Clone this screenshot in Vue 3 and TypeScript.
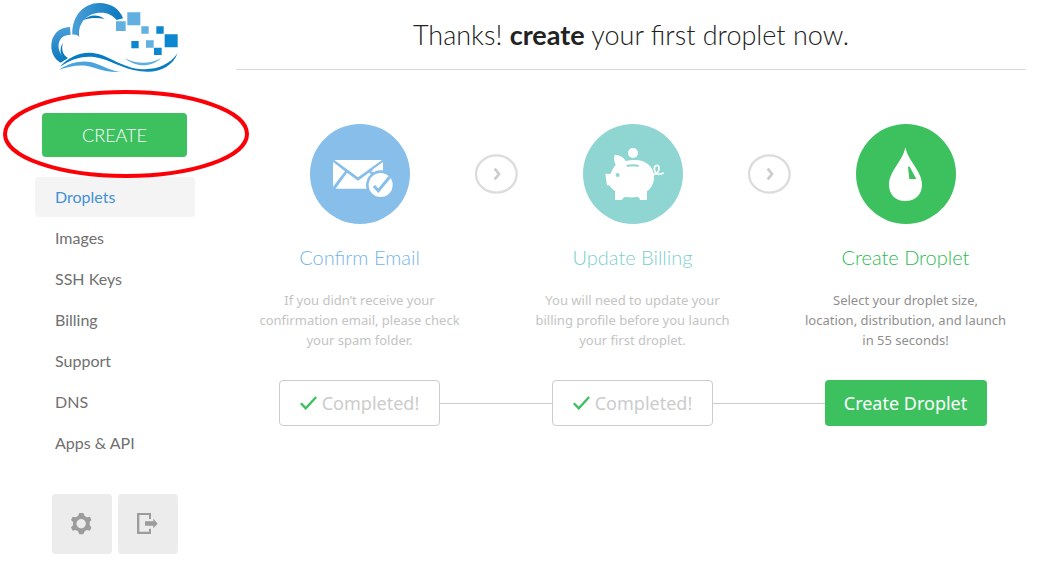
<script setup lang="ts">
interface NavItem {
  label: string
  active?: boolean
}

interface Step {
  id: 'email' | 'billing' | 'droplet'
  title: string
  lines: string[]
  done: boolean
}

const navItems: NavItem[] = [
  { label: 'Droplets', active: true },
  { label: 'Images' },
  { label: 'SSH Keys' },
  { label: 'Billing' },
  { label: 'Support' },
  { label: 'DNS' },
  { label: 'Apps & API' },
]

const steps: Step[] = [
  {
    id: 'email',
    title: 'Confirm Email',
    lines: ['If you didn’t receive your', 'confirmation email, please check', 'your spam folder.'],
    done: true,
  },
  {
    id: 'billing',
    title: 'Update Billing',
    lines: ['You will need to update your', 'billing profile before you launch', 'your first droplet.'],
    done: true,
  },
  {
    id: 'droplet',
    title: 'Create Droplet',
    lines: ['Select your droplet size,', 'location, distribution, and launch', 'in 55 seconds!'],
    done: false,
  },
]
</script>

<template>
  <div class="page">
    <aside class="sidebar">
      <a class="logo" href="#" aria-label="Home">
        <svg viewBox="0 0 450 240" width="150" height="80" aria-hidden="true">
          <defs>
            <linearGradient id="cloudA" x1="0" y1="0" x2="1" y2="0">
              <stop offset="0" stop-color="#4a9fd8" />
              <stop offset="1" stop-color="#0a78bd" />
            </linearGradient>
            <linearGradient id="cloudB" x1="0" y1="0" x2="0" y2="1">
              <stop offset="0" stop-color="#4a9fd8" />
              <stop offset="1" stop-color="#0a78bd" />
            </linearGradient>
          </defs>
          <path fill="url(#cloudA)" d="M97 104C95 50 130 9 178 9C214 9 240 28 249 55L230 60C219 46 203 38 184 38C144 37 112 66 118 111C112 105 105 103 97 104z" />
          <path fill="#0a78bd" d="M131 60c16-16 42-19 63-3-20-4-43-4-63 3z" />
          <path fill="url(#cloudB)" d="M90 81C55 82 34 106 34 138C34 160 44 178 62 188L78 178C61 165 54 150 56 133C58 115 70 104 92 104z" />
          <path fill="#0a78bd" d="M69 128c-6 19-1 36 15 46l-8 5c-16-14-19-33-7-51z" />
          <path fill="#087cc3" d="M60 200c24-26 58-45 99-41 45 6 67 31 116 44 57 12 106 1 138-43-17 41-57 61-111 54-62-9-92-36-139-43-41-5-72 9-103 29z" />
          <path fill="#4aa5de" d="M57 209c35-23 76-31 112-18 26 9 48 22 72 25-30 1-53-4-79-13-37-12-68-5-105 6z" />
          <path fill="#5caee2" d="M255 175c36 18 73 18 108 0-29 28-76 28-108 0z" />
          <g fill="#62afe2">
            <path d="M262 37h39v39h-39zM228 64h29v29h-29zM304 79h22v22h-22zM318 121h23v22h-23z" />
          </g>
          <g fill="#0b86cf">
            <path d="M349 79h22v22h-22zM374 103h39v39h-39zM274 123h22v22h-22zM342 143h23v22h-23z" />
          </g>
        </svg>
      </a>

      <div class="create-wrap">
        <button class="create" type="button">CREATE</button>
        <svg class="marker" viewBox="0 0 246 88" width="246" height="88" aria-hidden="true">
          <ellipse cx="123" cy="44" rx="121" ry="42" fill="none" stroke="#fb0007" stroke-width="4" />
        </svg>
      </div>

      <nav class="nav">
        <a
          v-for="item in navItems"
          :key="item.label"
          href="#"
          class="nav-link"
          :class="{ active: item.active }"
          >{{ item.label }}</a
        >
      </nav>

      <div class="tools">
        <button type="button" class="tool" aria-label="Settings">
          <svg viewBox="66 42 180 180" width="60" height="60" aria-hidden="true">
            <path
              fill="#9c9c9c"
              fill-rule="evenodd"
              d="M148 99h12l4 9 7 4 9-2 4 10-5 6v10l5 6-4 10-9-2-7 4-4 9h-12l-4-9-7-4-9 2-5-10 6-6v-10l-6-6 5-10 9 2 7-4zM153 117a14 14 0 1 0 1 0z"
            />
          </svg>
        </button>
        <button type="button" class="tool" aria-label="Log out">
          <svg viewBox="264 42 180 180" width="60" height="60" aria-hidden="true">
            <path fill="#9c9c9c" d="M321 99h42v18h-6v-12h-29v50h29v-9h6v16h-42z" />
            <path fill="#9c9c9c" d="M345 124h25v-8l13 15-13 14v-8h-25z" />
          </svg>
        </button>
      </div>
    </aside>

    <main class="main">
      <h1 class="heading">Thanks! <strong>create</strong> your first droplet now.</h1>

      <ol class="steps">
        <li v-for="(step, i) in steps" :key="step.id" class="step" :class="step.id">
          <div class="badge">
            <svg v-if="step.id === 'email'" viewBox="30 27 300 300" width="100" height="100" aria-hidden="true">
              <g fill="#fff">
                <path d="M103 135h143l-72 52z" />
                <path d="M99 141l36 28-36 46z" />
                <path d="M141 173l33 24 33-24 12 8-18 40h-94z" />
                <path d="M249 141v33l-34-8z" />
              </g>
              <circle cx="242" cy="210" r="44" fill="#87bfea" />
              <path fill="#fff" d="M211 170l12-4 3 6z" />
              <circle cx="242" cy="210" r="36" fill="#fff" />
              <path d="M222 213l13 14 34-41" fill="none" stroke="#87bfea" stroke-width="9" />
            </svg>
            <svg v-else-if="step.id === 'billing'" viewBox="39 27 300 300" width="100" height="100" aria-hidden="true">
              <circle cx="189" cy="114" r="15" fill="#fff" />
              <path
                fill="#fff"
                d="M134 119c15 1 28 8 33 19 11-3 22-4 34-3 28 3 49 20 51 47 1 21-7 36-21 47v26h-21c-1-6-4-9-8-9-12 2-24 2-35 0-6 0-7 4-12 9h-20v-27c-8-5-13-10-17-17h-7l-5-35 16 1c3-11 9-20 15-27-5-9-6-19-3-31z"
              />
              <circle cx="143" cy="180" r="6" fill="#8fd5d2" />
              <path d="M170 153q19-5 36 0" fill="none" stroke="#8fd5d2" stroke-width="6" />
              <path
                d="M249 179c12-1 20-10 18-21-1-9-12-9-14 1-1 9 5 18 13 19 6 0 10-2 15-5"
                fill="none"
                stroke="#fff"
                stroke-width="5"
              />
            </svg>
            <svg v-else viewBox="48 27 300 300" width="100" height="100" aria-hidden="true">
              <path
                fill="#fff"
                d="M196 97c8 41 50 72 50 112 0 30-21 49-50 49s-49-19-49-49c0-39 42-72 49-112z"
              />
              <path fill="#3dc15f" d="M204 155h5l20 37h-21z" />
            </svg>
          </div>
          <svg v-if="i < 2" class="arrow" viewBox="525 117 129 120" width="43" height="40" aria-hidden="true">
            <ellipse cx="589" cy="177" rx="61" ry="56" fill="none" stroke="#dcdcdc" stroke-width="7" />
            <path d="M584 161l13 16-13 16" fill="none" stroke="#cccccc" stroke-width="8" />
          </svg>

          <h2 class="title">{{ step.title }}</h2>
          <p class="text">
            <span v-for="line in step.lines" :key="line" class="line">{{ line }}</span>
          </p>

          <div class="action">
            <span class="rule" :class="{ hidden: i === 0 }"></span>
            <button v-if="step.done" type="button" class="btn done">
              <svg viewBox="150 332 51 43" width="17" height="14" aria-hidden="true">
                <path d="M152 354l15 16 32-35" fill="none" stroke="#3dc15f" stroke-width="7" />
              </svg>
              <span>Completed!</span>
            </button>
            <button v-else type="button" class="btn primary">Create Droplet</button>
            <span class="rule" :class="{ hidden: i === 2 }"></span>
          </div>
        </li>
      </ol>
    </main>
  </div>
</template>

<style>
body {
  margin: 0;
  background: #fff;
}
</style>

<style scoped>
.page {
  display: flex;
  align-items: flex-start;
  font-family: Lato, "Open Sans", sans-serif;
  color: #333;
}

button {
  border: 0;
  padding: 0;
  margin: 0;
  font-family: inherit;
  cursor: pointer;
}

a {
  text-decoration: none;
}

svg {
  display: block;
}

.sidebar {
  flex: none;
  width: 160px;
  padding: 0 28px 16px 35px;
}

.logo {
  display: block;
  margin-left: 5px;
}

.create-wrap {
  position: relative;
  margin: 33px 8px 20px 7px;
}

.create {
  display: block;
  width: 100%;
  height: 44px;
  border-radius: 4px;
  background: #3dc15f;
  color: #fff;
  font-size: 18px;
  font-weight: 300;
}

.marker {
  position: absolute;
  left: -39px;
  top: -23px;
  pointer-events: none;
}

.nav {
  display: flex;
  flex-direction: column;
  gap: 1px;
}

.nav-link {
  padding: 0 20px;
  border-radius: 4px;
  line-height: 40px;
  font-size: 16px;
  color: #707070;
}

.nav-link.active {
  background: #f4f4f4;
  color: #4291d3;
}

.tools {
  display: flex;
  gap: 6px;
  margin: 31px 0 0 17px;
}

.tool {
  width: 60px;
  height: 60px;
  border-radius: 4px;
  background: #ececec;
}

.main {
  flex: 1;
  min-width: 0;
  padding-right: 16px;
}

.heading {
  margin: 0 16px 54px 13px;
  padding: 15px 0 14px;
  border-bottom: 1px solid #dadada;
  text-align: center;
  font-size: 27px;
  line-height: 40px;
  font-weight: 300;
  color: #222;
}

.heading strong {
  font-weight: 700;
}

.steps {
  display: grid;
  grid-template-columns: repeat(3, 1fr);
  margin: 0;
  padding: 0;
  list-style: none;
}

.step {
  position: relative;
  text-align: center;
}

.badge {
  width: 100px;
  height: 100px;
  margin: 0 auto;
  border-radius: 50%;
  background: #87bfea;
}

.billing .badge {
  background: #8fd5d2;
}

.droplet .badge {
  background: #3dc15f;
}

.arrow {
  position: absolute;
  right: -22px;
  top: 30px;
}

.title {
  margin: 18px 0;
  font-size: 20px;
  line-height: 30px;
  font-weight: 300;
  color: #74b5e8;
}

.billing .title {
  color: #7dcfcb;
}

.droplet .title {
  color: #2dbb52;
}

.text {
  margin: 0 0 30px;
  font-family: "Noto Sans", "Open Sans", sans-serif;
  font-size: 13px;
  line-height: 20px;
  color: #c4c4c4;
}

.droplet .text {
  color: #8f8f8f;
}

.line {
  display: block;
}

.action {
  display: flex;
  align-items: center;
}

.rule {
  flex: 1;
  height: 1px;
  background: #ccc;
}

.rule.hidden {
  visibility: hidden;
}

.btn {
  display: flex;
  align-items: center;
  justify-content: center;
  gap: 5px;
  width: 162px;
  height: 46px;
  border-radius: 4px;
  font-family: "Noto Sans", "Open Sans", sans-serif;
  font-size: 18px;
  line-height: 24px;
}

.done {
  width: 161px;
  border: 1px solid #ccc;
  background: #fff;
  color: #ccc;
}

.primary {
  background: #3dc15f;
  color: #fff;
}
</style>
